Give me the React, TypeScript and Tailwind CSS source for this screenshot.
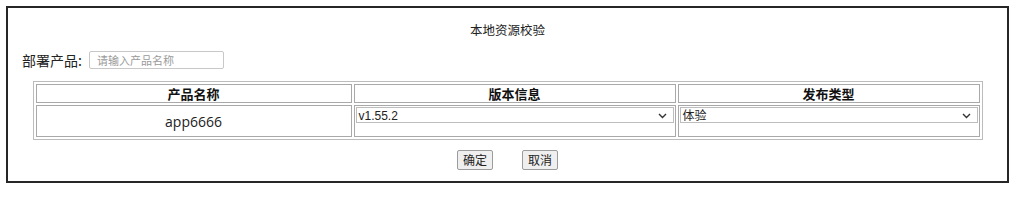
import React from 'react';

const cjk = '"Noto Sans CJK SC", "Liberation Sans", sans-serif';

function Chevron() {
  return (
    <svg width="9" height="6" viewBox="0 0 9 6" className="absolute right-[6px] top-[5px]">
      <path d="M1 1 L4.5 4.5 L8 1" fill="none" stroke="#333" strokeWidth="1.4" />
    </svg>
  );
}

function FakeSelect({ value }: { value: string }) {
  return (
    <div className="relative h-[16px] w-full border border-[#bdbdbd] bg-white text-left text-[12px] leading-[14px] text-[#222] pl-[2px]"
      style={{ fontFamily: cjk }}>
      <span className="font-['Liberation_Sans','Noto_Sans_CJK_SC',sans-serif]">{value}</span>
      <Chevron />
    </div>
  );
}

export default function App() {
  return (
    <div className="w-[1016px] h-[201px] bg-white pt-[6px] pl-[6px]" style={{ fontFamily: cjk }}>
      <div className="w-[1003px] h-[177px] border-2 border-[#262626] flex flex-col">
        {/* Title */}
        <div className="pt-[14px] text-center text-[12.5px] leading-[16px] text-[#222]">本地资源校验</div>

        {/* Product filter */}
        <div className="mt-[13px] flex items-center pl-[14px] h-[18px]">
          <span className="text-[14px] leading-[18px] text-[#222]">部署产品:</span>
          <input
            placeholder="请输入产品名称"
            className="ml-[7px] h-[18px] w-[135px] border border-[#c8c8c8] rounded-[2px] px-[7px] text-[11px] placeholder:text-[#9a9a9a] outline-none"
          />
        </div>

        {/* Table */}
        <div className="mt-[12px] flex justify-center">
          <table className="w-[950px] border border-[#bcbcbc] border-separate border-spacing-[2px] table-fixed">
            <thead>
              <tr>
                <th className="w-[316px] h-[19px] border border-[#a9a9a9] text-[13px] leading-[17px] font-bold text-[#111]">产品名称</th>
                <th className="w-[322px] border border-[#a9a9a9] text-[13px] leading-[17px] font-bold text-[#111]">版本信息</th>
                <th className="border border-[#a9a9a9] text-[13px] leading-[17px] font-bold text-[#111]">发布类型</th>
              </tr>
            </thead>
            <tbody>
              <tr>
                <td className="h-[32px] border border-[#a9a9a9] text-center text-[14px] text-[#222] font-['Open_Sans',sans-serif]">app6666</td>
                <td className="h-[32px] border border-[#a9a9a9] align-top pt-[1px] px-[1px]">
                  <FakeSelect value="v1.55.2" />
                </td>
                <td className="h-[32px] border border-[#a9a9a9] align-top pt-[1px] px-[1px]">
                  <FakeSelect value="体验" />
                </td>
              </tr>
            </tbody>
          </table>
        </div>

        {/* Actions */}
        <div className="mt-[10px] flex justify-center gap-[29px]">
          <button className="h-[20px] px-[5px] border border-[#9c9c9c] rounded-[2px] bg-[#efefef] text-[12px] leading-[18px] text-[#222]">确定</button>
          <button className="h-[20px] px-[5px] border border-[#9c9c9c] rounded-[2px] bg-[#efefef] text-[12px] leading-[18px] text-[#222]">取消</button>
        </div>
      </div>
    </div>
  );
}
